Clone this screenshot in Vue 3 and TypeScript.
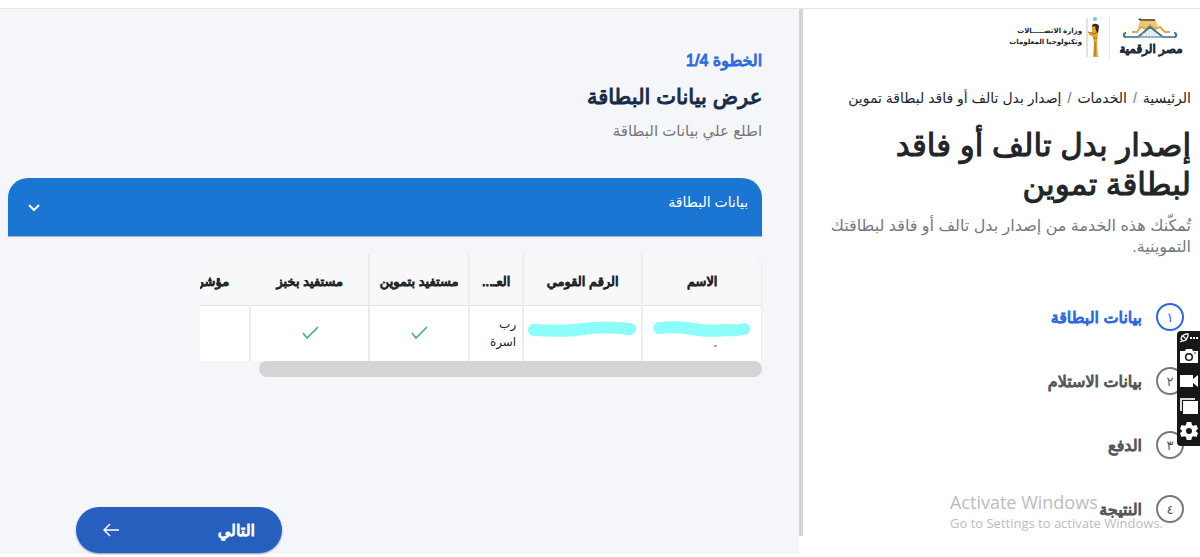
<script setup lang="ts">
interface Step {
  mark: string
  label: string
}

const steps: Step[] = [
  { mark: '١', label: 'بيانات البطاقة' },
  { mark: '٢', label: 'بيانات الاستلام' },
  { mark: '٣', label: 'الدفع' },
  { mark: '٤', label: 'النتيجة' },
]
const currentStep = 0
</script>

<template>
  <div class="page" dir="rtl" lang="ar">
    <aside class="side">
      <header class="brands">
        <div class="brand-egypt">
          <svg width="56" height="22" viewBox="0 0 56 22" aria-hidden="true">
            <path d="M17 2h16l2 8H15z" fill="#efc875" />
            <path d="M17 2h15" stroke="#75654b" stroke-width="2" />
            <path d="M15 2l2-2 1 2z" fill="#263349" />
            <path d="M9 14h5l4-5 5 2 4-4 5 4 5-2 5 5h5" fill="none" stroke="#dfa84b" stroke-width="2" />
            <path d="M3 15c-3 0-3 4 0 4h12L27 9l13 10h11c3 0 3-4 0-4" fill="none" stroke="#44728c" stroke-width="2" />
            <path d="M3 19h48" stroke="#6f9bb0" stroke-width="1.5" />
            <path d="M20 18v-3m3 3v-4m3 4v-6m3 6v-6m3 6v-4" stroke="#b9cad9" stroke-width="1" />
          </svg>
          <span class="strong">مصر الرقمية</span>
        </div>
        <div class="brand-ministry">
          <svg width="14" height="42" viewBox="0 0 14 42" aria-hidden="true">
            <path d="M2 1v39" stroke="#c9c4b8" stroke-width="1" />
            <circle cx="10" cy="2" r="2" fill="#7cc8c3" />
            <path d="M7 9c0-3 6-3 7 0l-1 8-5-2z" fill="#332a24" />
            <path d="M7 10l3-1 1 5 2 2-1 10 1 14H8l1-13-1-7-5-3 4-2z" fill="#e6a52d" />
            <path d="M3 15l6 2 3-2M8 21h4M10 25v14" fill="none" stroke="#9b6820" stroke-width="1" />
          </svg>
          <p>وزارة الاتصـــــالات<br />وتكنولوجيا المعلومات</p>
        </div>
      </header>

      <nav class="crumbs" aria-label="مسار التنقل">
        <a href="#">الرئيسية</a><i>/</i><a href="#">الخدمات</a><i>/</i><span>إصدار بدل تالف أو فاقد لبطاقة تموين</span>
      </nav>

      <h1 class="strong">إصدار بدل تالف أو فاقد<br />لبطاقة تموين</h1>
      <p class="about">تُمكّنك هذه الخدمة من إصدار بدل تالف أو فاقد لبطاقتك<br />التموينية.</p>

      <ol class="steps">
        <li v-for="(step, i) in steps" :key="step.mark" :class="{ current: i === currentStep }">
          <span class="mark">{{ step.mark }}</span>
          <span class="strong">{{ step.label }}</span>
        </li>
      </ol>
    </aside>

    <div class="divider"></div>

    <main class="main">
      <p class="count strong">الخطوة 1/4</p>
      <h2 class="strong">عرض بيانات البطاقة</h2>
      <p class="hint">اطلع علي بيانات البطاقة</p>

      <button class="panel" type="button" aria-expanded="true">
        <span>بيانات البطاقة</span>
        <svg width="12" height="8" viewBox="0 0 12 8" aria-hidden="true">
          <path d="M1 1l5 5 5-5" fill="none" stroke="#fff" stroke-width="2" />
        </svg>
      </button>

      <div class="grid">
        <div class="viewport">
          <table>
            <colgroup>
              <col class="wide" /><col class="wide" /><col class="narrow" />
              <col class="medium" /><col class="wide" /><col class="rest" />
            </colgroup>
            <thead>
              <tr>
                <th>الاسم</th>
                <th>الرقم القومي</th>
                <th>العـ...</th>
                <th>مستفيد بتموين</th>
                <th class="open">مستفيد بخبز</th>
                <th class="last">مؤشر</th>
              </tr>
            </thead>
            <tbody>
              <tr>
                <td>
                  <svg class="mask" viewBox="2 -2 98 28" width="98" height="28" aria-hidden="true">
                    <path d="M8 7Q26 5 42 8T75 9Q84 10 93 8" fill="none" stroke="#8cfdf9" stroke-width="12" stroke-linecap="round" />
                    <path d="M63 25h3" stroke="#555" stroke-width="1" />
                  </svg>
                </td>
                <td>
                  <svg class="mask" viewBox="2 -2 110 28" width="110" height="28" aria-hidden="true">
                    <path d="M8 9Q38 11 58 8T104 8" fill="none" stroke="#8cfdf9" stroke-width="12" stroke-linecap="round" />
                  </svg>
                </td>
                <td class="role">رب<br />اسرة</td>
                <td v-for="n in 2" :key="n">
                  <svg width="18" height="14" viewBox="0 0 18 14" aria-label="نعم">
                    <path d="M2 7l4 5L17 1" fill="none" stroke="#49a98b" stroke-width="1.6" />
                  </svg>
                </td>
                <td></td>
              </tr>
            </tbody>
          </table>
        </div>
        <div class="track"><div class="thumb"></div></div>
      </div>

      <button class="next" type="button">
        <span class="strong">التالي</span>
        <svg width="16" height="14" viewBox="0 0 16 14" aria-hidden="true">
          <path d="M16 7H1M7 1L1 7l6 6" fill="none" stroke="#fff" stroke-width="1.5" />
        </svg>
      </button>
    </main>

    <div class="watermark" dir="ltr" lang="en">
      <strong>Activate Windows</strong>
      <span>Go to Settings to activate Windows.</span>
    </div>

    <div class="recorder" dir="ltr">
      <button class="menu" type="button" aria-label="Menu">
        <svg width="19" height="10" viewBox="0 0 19 10">
          <path d="M2 6l1-3 4-2h2v2L7 7 4 8zM1 9l2-1M4 3l3 3" fill="none" stroke="#fff" stroke-width="1.3" />
          <path d="M11 5h2m1 0h2m1 0h2" stroke="#fff" stroke-width="2" />
        </svg>
      </button>
      <button type="button" aria-label="Camera">
        <svg width="18" height="16" viewBox="0 0 18 16">
          <path d="M0 3h5l1-2h6l1 2h5v12H0z" fill="#fff" />
          <circle cx="9" cy="9" r="3.3" fill="#fff" stroke="#171717" stroke-width="1.5" />
          <circle cx="15" cy="5" r=".8" fill="#171717" />
        </svg>
      </button>
      <button type="button" aria-label="Video">
        <svg width="18" height="16" viewBox="0 0 18 16">
          <path d="M0 2h13v4l5-4v12l-5-4v4H0z" fill="#fff" />
        </svg>
      </button>
      <button type="button" aria-label="Gallery">
        <svg width="18" height="16" viewBox="0 0 18 16">
          <path d="M0 0h15v2H2v11H0z" fill="#ddd" />
          <path d="M3 3h15v13H3z" fill="#fff" />
        </svg>
      </button>
      <button type="button" aria-label="Settings">
        <svg width="18" height="18" viewBox="0 0 24 24">
          <path fill="#fff" fill-rule="evenodd" d="M9 0h6l1 4 2 1 4-1 2 5-3 3 3 3-2 5-4-1-2 1-1 4H9l-1-4-2-1-4 1-2-5 3-3-3-3 2-5 4 1 2-1zM12 8a4 4 0 1 0 0 8 4 4 0 0 0 0-8z" />
        </svg>
      </button>
    </div>
  </div>
</template>

<style>
body {
  margin: 0;
  background: #fff;
}
</style>

<style scoped>
* {
  box-sizing: border-box;
}

.page {
  position: relative;
  display: grid;
  grid-template-columns: 1fr 4px 66.6%;
  min-height: calc(100vh - 8px);
  margin-top: 8px;
  border-top: 1px solid #e6e6e6;
  overflow: hidden;
  background: #fff;
  color: #212529;
  font-family: "Liberation Sans", "DejaVu Sans", sans-serif;
}

p,
h1,
h2,
ol {
  margin: 0;
  padding: 0;
}

button {
  border: 0;
  font-family: inherit;
  cursor: pointer;
}

svg {
  display: block;
  flex: none;
}

.strong,
th {
  font-weight: normal;
  -webkit-text-stroke: 1px currentColor;
}

.side {
  padding: 8px 9px 0 0;
}

.brands {
  display: flex;
  align-items: center;
  height: 42px;
  padding-right: 8px;
}

.brand-egypt {
  display: flex;
  flex-direction: column;
  align-items: center;
  width: 64px;
  color: #20283e;
  font-size: 12px;
  line-height: 18px;
  white-space: nowrap;
}

.brand-ministry {
  display: flex;
  align-items: center;
  gap: 3px;
  margin-right: 9px;
  padding-right: 10px;
  border-right: 1px solid #e5e5e5;
  font-size: 7px;
  font-weight: bold;
  line-height: 11px;
  white-space: nowrap;
}

.brand-ministry p {
  margin-top: -4px;
}

.crumbs {
  margin-top: 28px;
  font-size: 14px;
  line-height: 22px;
  white-space: nowrap;
}

.crumbs a {
  color: #212529;
  text-decoration: none;
}

.crumbs i {
  margin: 0 6px;
  color: #6c757d;
  font-style: normal;
}

h1 {
  margin-top: 17px;
  font-size: 31px;
  line-height: 39px;
  white-space: nowrap;
}

.about {
  margin-top: 11px;
  color: #73797f;
  font-size: 16px;
  line-height: 21px;
  white-space: nowrap;
}

.steps {
  display: grid;
  gap: 36px;
  margin-top: 46px;
  padding-right: 7px;
  list-style: none;
}

.steps li {
  display: flex;
  align-items: center;
  gap: 14px;
  height: 28px;
  color: #55565a;
  font-size: 16px;
}

.mark {
  display: grid;
  place-items: center;
  width: 28px;
  height: 28px;
  border: 2px solid #77787b;
  border-radius: 50%;
  font-size: 13px;
}

.steps .current {
  color: #2f67df;
}

.current .mark {
  border-color: #2f67df;
}

.divider {
  margin-bottom: 21px;
  background: #d2d3d5;
}

.main {
  display: flex;
  flex-direction: column;
  margin-bottom: 3px;
  padding: 40px 37px 1px 8px;
  background: #f4f6fa;
}

.count {
  color: #2f6ae0;
  font-size: 16px;
  line-height: 24px;
}

h2 {
  margin-top: 8px;
  color: #182c49;
  font-size: 21px;
  line-height: 32px;
}

.hint {
  margin-top: 6px;
  color: #777;
  font-size: 15px;
  line-height: 24px;
}

.panel {
  display: flex;
  justify-content: space-between;
  height: 58px;
  margin-top: 35px;
  padding: 12px 14px 0 20px;
  border-radius: 20px 20px 0 0;
  background: #1b75d3;
  box-shadow: 0 1px 1px #a5adba;
  color: #fff;
  font-size: 14px;
  line-height: 24px;
}

.panel svg {
  margin-top: 14px;
}

.grid {
  width: 562px;
  max-width: 100%;
  margin-top: 18px;
}

.viewport {
  overflow: hidden;
  border-right: 1px solid #ececee;
  border-radius: 0 12px 0 0;
}

table {
  width: 100%;
  table-layout: fixed;
  border-collapse: collapse;
}

.wide {
  width: 119px;
}

.narrow {
  width: 54px;
}

.medium {
  width: 100px;
}

th,
td {
  padding: 0;
  border-left: 2px solid #ececee;
  text-align: center;
  font-size: 13px;
  white-space: nowrap;
}

th {
  height: 51px;
  padding-top: 4px;
  background: #f8f8f8;
  border-bottom: 1px solid #e2e2e3;
}

td {
  height: 56px;
  background: #fff;
}

td svg {
  margin: 0 auto;
}

.open {
  border-left-color: #f8f8f8;
}

th.last {
  padding-right: 20px;
  text-align: right;
}

th:last-child,
td:last-child {
  border-left: 0;
}

td.role {
  padding-right: 6px;
  font-size: 12px;
  text-align: right;
  line-height: 18px;
}

.thumb {
  width: 89.5%;
  height: 16px;
  border-radius: 8px;
  background: #d4d4d4;
}

.next {
  display: flex;
  align-items: center;
  justify-content: space-between;
  align-self: flex-end;
  width: 206px;
  height: 46px;
  margin-top: auto;
  margin-left: 68px;
  padding: 0 27px;
  border-radius: 23px;
  background: #275fbe;
  box-shadow: 0 1px 2px #8a97ae;
  color: #fff;
  font-size: 16px;
}

.watermark {
  position: absolute;
  right: 37px;
  bottom: 25px;
  display: grid;
  color: #bcbcbc;
  font-family: "Open Sans", "Noto Sans", sans-serif;
  font-size: 13px;
  line-height: 18px;
  white-space: nowrap;
}

.watermark strong {
  font-size: 18px;
  font-weight: normal;
  line-height: 23px;
}

.recorder {
  position: absolute;
  top: 322px;
  right: 0;
  display: flex;
  flex-direction: column;
  align-items: center;
  width: 23px;
  height: 115px;
  padding-top: 1px;
  border-radius: 4px 0 0 4px;
  background: #171717;
}

.recorder button {
  display: grid;
  place-items: center;
  width: 23px;
  height: 25px;
  padding: 0;
  background: none;
}

.recorder .menu {
  height: 11px;
}
</style>
